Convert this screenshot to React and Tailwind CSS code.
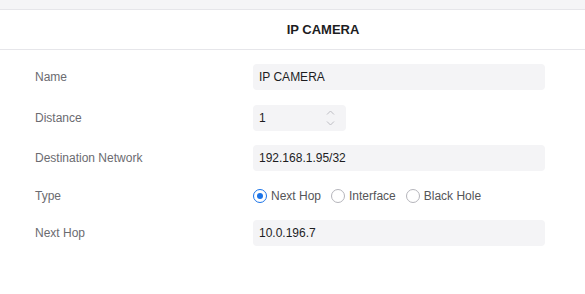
import React, { useState } from "react";

const Field = ({ label, children, className = "" }) => (
  <div className={`flex items-center ${className}`}>
    <div className="w-[253px] shrink-0 pl-[35px] text-[12px] text-[#6b6b70]">{label}</div>
    {children}
  </div>
);

const Radio = ({ checked, label, onClick }) => (
  <button onClick={onClick} className="flex items-center gap-[4px] mr-[10px]">
    <span
      className={`w-[14px] h-[14px] rounded-full border flex items-center justify-center bg-white ${
        checked ? "border-[#1a73e8]" : "border-[#b5b5bb]"
      }`}
    >
      {checked && <span className="w-[6px] h-[6px] rounded-full bg-[#1a73e8]" />}
    </span>
    <span className="text-[12px] text-[#555558]">{label}</span>
  </button>
);

const App = () => {
  const [type, setType] = useState("next");
  const [distance, setDistance] = useState(1);

  return (
    <div className="w-[585px] h-[294px] bg-white font-['Liberation_Sans',Arial,sans-serif] overflow-hidden">
      {/* top strip */}
      <div className="h-[10px] bg-[#f5f5f7] border-b border-[#e6e6ea]" />
      <div className="h-[40px] border-b border-[#e6e6ea] flex items-center justify-center pl-[61px]">
        <span className="text-[13px] font-bold text-[#1d1d1f]">IP CAMERA</span>
      </div>

      <div className="pt-[14px]">
        <Field label="Name">
          <div className="w-[292px] h-[26px] bg-[#f4f4f6] rounded-[4px] flex items-center px-[6px] text-[12px] text-[#1d1d1f]">
            IP CAMERA
          </div>
        </Field>

        <Field label="Distance" className="mt-[15px]">
          <div className="w-[93px] h-[26px] bg-[#f4f4f6] rounded-[4px] flex items-center justify-between pl-[6px] pr-[11px] text-[12px] text-[#1d1d1f]">
            <span>{distance}</span>
            <div className="flex flex-col gap-[6px]">
              <svg width="9" height="5" viewBox="0 0 9 5" onClick={() => setDistance(distance + 1)}>
                <path d="M1 4.5 L4.5 1 L8 4.5" fill="none" stroke="#bdbdc3" strokeWidth="1" />
              </svg>
              <svg width="9" height="5" viewBox="0 0 9 5" onClick={() => setDistance(Math.max(1, distance - 1))}>
                <path d="M1 0.5 L4.5 4 L8 0.5" fill="none" stroke="#bdbdc3" strokeWidth="1" />
              </svg>
            </div>
          </div>
        </Field>

        <Field label="Destination Network" className="mt-[14px]">
          <div className="w-[292px] h-[26px] bg-[#f4f4f6] rounded-[4px] flex items-center px-[6px] text-[12px] text-[#1d1d1f]">
            192.168.1.95/32
          </div>
        </Field>

        <Field label="Type" className="mt-[12px] h-[26px]">
          <div className="flex items-center">
            <Radio checked={type === "next"} label="Next Hop" onClick={() => setType("next")} />
            <Radio checked={type === "iface"} label="Interface" onClick={() => setType("iface")} />
            <Radio checked={type === "black"} label="Black Hole" onClick={() => setType("black")} />
          </div>
        </Field>

        <Field label="Next Hop" className="mt-[11px]">
          <div className="w-[292px] h-[26px] bg-[#f4f4f6] rounded-[4px] flex items-center px-[6px] text-[12px] text-[#1d1d1f]">
            10.0.196.7
          </div>
        </Field>
      </div>
    </div>
  );
};

export default App;
